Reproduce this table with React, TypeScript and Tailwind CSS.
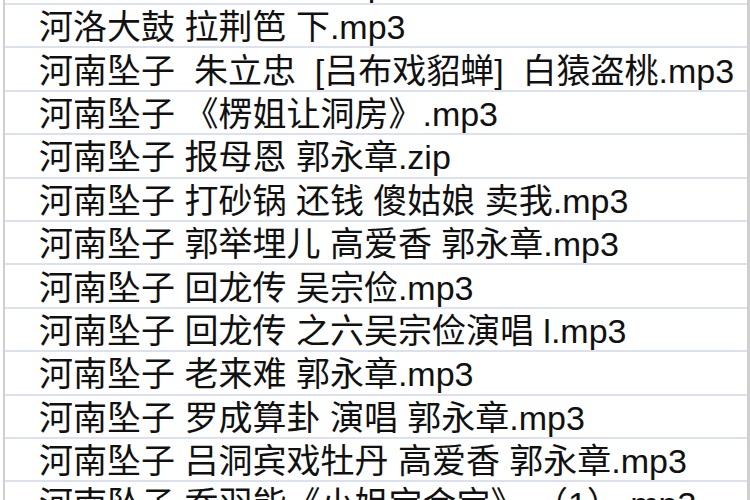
import React from 'react';

const files = [
  '河洛大鼓 拉荆笆 上.mp3',
  '河洛大鼓 拉荆笆 下.mp3',
  '河南坠子  朱立忠  [吕布戏貂蝉]  白猿盗桃.mp3',
  '河南坠子 《楞姐让洞房》.mp3',
  '河南坠子 报母恩 郭永章.zip',
  '河南坠子 打砂锅 还钱 傻姑娘 卖我.mp3',
  '河南坠子 郭举埋儿 高爱香 郭永章.mp3',
  '河南坠子 回龙传 吴宗俭.mp3',
  '河南坠子 回龙传 之六吴宗俭演唱 l.mp3',
  '河南坠子 老来难 郭永章.mp3',
  '河南坠子 罗成算卦 演唱 郭永章.mp3',
  '河南坠子 吕洞宾戏牡丹 高爱香 郭永章.mp3',
  '河南坠子 乔羽能《小姐宝会宝》 （1）.mp3',
];

export default function App() {
  return (
    <div className="w-[750px] h-[500px] overflow-hidden bg-white pl-[3px]">
      <div
        className="h-[580px] -mt-[38.4px] border-l-2 border-r-[3px] border-[#cfcfcf] flex flex-col"
        style={{ fontFamily: '"Liberation Sans", "Noto Sans CJK SC", sans-serif' }}
      >
        {files.map((name, i) => (
          <div
            key={i}
            className="h-[43.4px] shrink-0 border-b-2 border-[#dbe1ee] flex items-center pl-[34px] pt-[3px] text-[34px] leading-none text-[#111] whitespace-pre"
          >
            {name}
          </div>
        ))}
      </div>
    </div>
  );
}
